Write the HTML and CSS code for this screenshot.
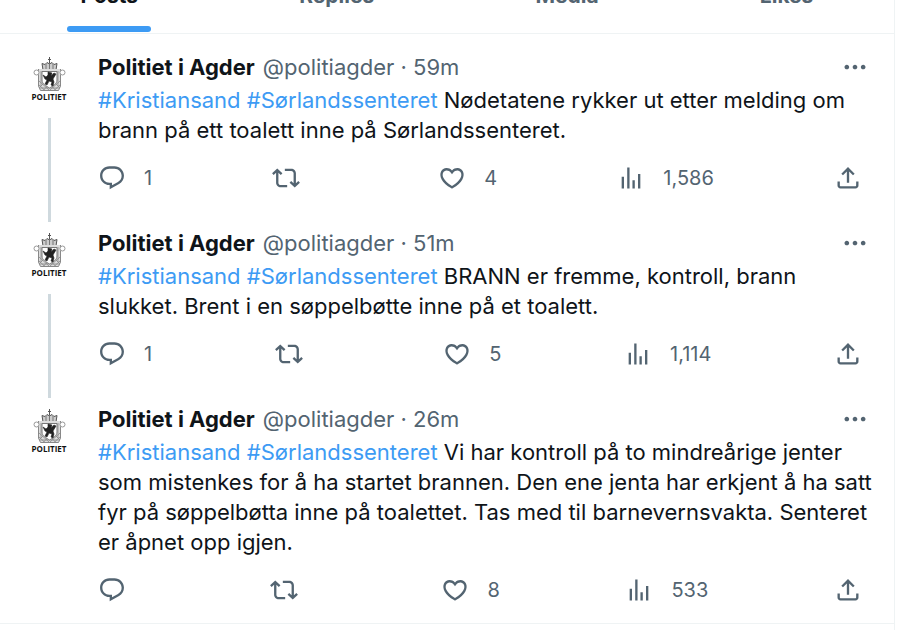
FILE: index.html
```
<!DOCTYPE html>
<html lang="en">
<head>
    <meta charset="UTF-8">
    <title>Politiet i Agder</title>
    <link rel="stylesheet" href="styles.css">
</head>
<body>

    <!-- shared icons -->
    <svg class="sprite" aria-hidden="true">
        <symbol id="icon-reply" viewBox="0 0 24 24">
            <path d="M1.751 10c0-4.42 3.584-8 8.005-8h4.366c4.49 0 8.129 3.64 8.129 8.13 0 2.96-1.607 5.68-4.196 7.11l-8.054 4.46v-3.69h-.067c-4.49.1-8.183-3.51-8.183-8.01zm8.005-6c-3.317 0-6.005 2.69-6.005 6 0 3.37 2.77 6.08 6.138 6.01l.351-.01h1.761v2.3l5.087-2.81c1.951-1.08 3.163-3.13 3.163-5.36 0-3.39-2.744-6.13-6.129-6.13H9.756z"/>
        </symbol>
        <symbol id="icon-repost" viewBox="0 0 24 24">
            <path d="M4.5 3.88l4.432 4.14-1.364 1.46L5.5 7.55V16c0 1.1.896 2 2 2H13v2H7.5c-2.209 0-4-1.79-4-4V7.55L1.432 9.48.068 8.02 4.5 3.88zM16.5 6H11V4h5.5c2.209 0 4 1.79 4 4v8.45l2.068-1.93 1.364 1.46-4.432 4.14-4.432-4.14 1.364-1.46 2.068 1.93V8c0-1.1-.896-2-2-2z"/>
        </symbol>
        <symbol id="icon-like" viewBox="0 0 24 24">
            <path d="M16.697 5.5c-1.222-.06-2.679.51-3.89 2.16l-.805 1.09-.806-1.09C9.984 6.01 8.526 5.44 7.304 5.5c-1.243.07-2.349.78-2.91 1.91-.552 1.12-.633 2.78.479 4.82 1.074 1.97 3.257 4.27 7.129 6.61 3.87-2.34 6.052-4.64 7.126-6.61 1.111-2.04 1.03-3.7.477-4.82-.561-1.13-1.666-1.84-2.908-1.91zm4.187 7.69c-1.351 2.48-4.001 5.12-8.379 7.67l-.503.3-.504-.3c-4.379-2.55-7.029-5.19-8.382-7.67-1.36-2.5-1.41-4.86-.514-6.67.887-1.79 2.647-2.91 4.601-3.01 1.651-.09 3.368.56 4.798 2.01 1.429-1.45 3.146-2.1 4.796-2.01 1.954.1 3.714 1.22 4.601 3.01.896 1.81.846 4.17-.514 6.67z"/>
        </symbol>
        <symbol id="icon-views" viewBox="0 0 24 24">
            <path d="M8.75 21V3h2v18h-2zM18 21V8.5h2V21h-2zM4 21l.004-10h2L6 21H4zm9.248 0v-7h2v7h-2z"/>
        </symbol>
        <symbol id="icon-share" viewBox="0 0 24 24">
            <path d="M12 2.59l5.7 5.7-1.41 1.42L13 6.41V16h-2V6.41l-3.3 3.3-1.41-1.42L12 2.59zM21 15l-.02 3.51c0 1.38-1.12 2.49-2.5 2.49H5.5C4.11 21 3 19.88 3 18.5V15h2v3.5c0 .28.22.5.5.5h12.98c.28 0 .5-.22.5-.5L19 15h2z"/>
        </symbol>
        <symbol id="icon-more" viewBox="0 0 24 24">
            <path d="M3 12c0-1.1.9-2 2-2s2 .9 2 2-.9 2-2 2-2-.9-2-2zm9 2c1.1 0 2-.9 2-2s-.9-2-2-2-2 .9-2 2 .9 2 2 2zm7 0c1.1 0 2-.9 2-2s-.9-2-2-2-2 .9-2 2 .9 2 2 2z"/>
        </symbol>
        <symbol id="crest" viewBox="0 0 60 60">
            <!-- crown -->
            <path d="M30.500 5v6M29 7.500h3" stroke="#555"/>
            <path d="M23 11.500l1 6.500h13l1-6.500-3 1-2-2-2.500 1.500-2.500-1.500-2 2z" fill="#ccc" stroke="#555"/>
            <path d="M27 12v5M30.500 11v6M34 12v5" stroke="#777"/>
            <path d="M23.500 18.500h14" stroke="#333" stroke-width="1.500"/>
            <!-- mesh -->
            <path d="M19.500 17v17l2 4.500h18l2-4.500V17" fill="#ddd" stroke="#888"/>
            <path d="M22 19v15M39 19v15" stroke="#999"/>
            <path d="M20 29l10 9M20 33l6 5.500M41 29l-10 9M41 33l-6 5.500M20 36l5-5M41 36l-5-5M24 38.500l5-5M37 38.500l-5-5M21 36h19" stroke="#888" stroke-width=".8" fill="none"/>
            <circle cx="17.500" cy="20.500" r="2.500" fill="#fff" stroke="#999"/>
            <circle cx="43.500" cy="20.500" r="2.500" fill="#fff" stroke="#999"/>
            <!-- shield and lion -->
            <path d="M23 19.500h15V28c0 4-4 6-7.500 8-3.500-2-7.500-4-7.500-8z" fill="#fff" stroke="#777"/>
            <path d="M29 20l4 1-1 3 3-3 2 1-3 5 1 3-1 4-2-1 1-3-3-1-2 4-2-1 2-4-2-1-2-4 3 2 2-2z" fill="#222" stroke="#222" stroke-width=".6"/>
            <text x="30" y="48" text-anchor="middle" class="crest-text">POLITIET</text>
        </symbol>
    </svg>

    <main class="timeline">
        <nav class="tabs">
            <a href="#" class="tab active">Posts</a>
            <a href="#" class="tab">Replies</a>
            <a href="#" class="tab">Media</a>
            <a href="#" class="tab">Likes</a>
        </nav>

        <section class="thread">
            <article class="post">
                <div class="rail">
                    <svg class="avatar" role="img" aria-label="Politiet"><use href="#crest"/></svg>
                    <div class="line"></div>
                </div>
                <div class="content">
                    <header class="post-header">
                        <a href="#" class="name">Politiet i Agder</a>
                        <span class="meta">@politiagder · 59m</span>
                        <button class="more" aria-label="More"><svg class="icon"><use href="#icon-more"/></svg></button>
                    </header>
                    <p class="text"><a href="#">#Kristiansand</a> <a href="#">#Sørlandssenteret</a> Nødetatene rykker ut etter melding om brann på ett toalett inne på Sørlandssenteret.</p>
                    <div class="actions">
                        <button aria-label="Reply"><svg class="icon"><use href="#icon-reply"/></svg><span class="count">1</span></button>
                        <button aria-label="Repost"><svg class="icon"><use href="#icon-repost"/></svg><span class="count"></span></button>
                        <button aria-label="Like"><svg class="icon"><use href="#icon-like"/></svg><span class="count">4</span></button>
                        <button aria-label="Views"><svg class="icon"><use href="#icon-views"/></svg><span class="count">1,586</span></button>
                        <button aria-label="Share"><svg class="icon"><use href="#icon-share"/></svg></button>
                    </div>
                </div>
            </article>

            <article class="post">
                <div class="rail">
                    <svg class="avatar" role="img" aria-label="Politiet"><use href="#crest"/></svg>
                    <div class="line"></div>
                </div>
                <div class="content">
                    <header class="post-header">
                        <a href="#" class="name">Politiet i Agder</a>
                        <span class="meta">@politiagder · 51m</span>
                        <button class="more" aria-label="More"><svg class="icon"><use href="#icon-more"/></svg></button>
                    </header>
                    <p class="text"><a href="#">#Kristiansand</a> <a href="#">#Sørlandssenteret</a> BRANN er fremme, kontroll, brann slukket. Brent i en søppelbøtte inne på et toalett.</p>
                    <div class="actions">
                        <button aria-label="Reply"><svg class="icon"><use href="#icon-reply"/></svg><span class="count">1</span></button>
                        <button aria-label="Repost"><svg class="icon"><use href="#icon-repost"/></svg><span class="count"></span></button>
                        <button aria-label="Like"><svg class="icon"><use href="#icon-like"/></svg><span class="count">5</span></button>
                        <button aria-label="Views"><svg class="icon"><use href="#icon-views"/></svg><span class="count">1,114</span></button>
                        <button aria-label="Share"><svg class="icon"><use href="#icon-share"/></svg></button>
                    </div>
                </div>
            </article>

            <article class="post">
                <div class="rail">
                    <svg class="avatar" role="img" aria-label="Politiet"><use href="#crest"/></svg>
                </div>
                <div class="content">
                    <header class="post-header">
                        <a href="#" class="name">Politiet i Agder</a>
                        <span class="meta">@politiagder · 26m</span>
                        <button class="more" aria-label="More"><svg class="icon"><use href="#icon-more"/></svg></button>
                    </header>
                    <p class="text"><a href="#">#Kristiansand</a> <a href="#">#Sørlandssenteret</a> Vi har kontroll på to mindreårige jenter som mistenkes for å ha startet brannen. Den ene jenta har erkjent å ha satt fyr på søppelbøtta inne på toalettet. Tas med til barnevernsvakta. Senteret er åpnet opp igjen.</p>
                    <div class="actions">
                        <button aria-label="Reply"><svg class="icon"><use href="#icon-reply"/></svg><span class="count"></span></button>
                        <button aria-label="Repost"><svg class="icon"><use href="#icon-repost"/></svg><span class="count"></span></button>
                        <button aria-label="Like"><svg class="icon"><use href="#icon-like"/></svg><span class="count">8</span></button>
                        <button aria-label="Views"><svg class="icon"><use href="#icon-views"/></svg><span class="count">533</span></button>
                        <button aria-label="Share"><svg class="icon"><use href="#icon-share"/></svg></button>
                    </div>
                </div>
            </article>
        </section>
    </main>

</body>
</html>
```
FILE: styles.css
```
* {
    box-sizing: border-box;
}

body {
    margin: 0;
    padding-right: 24px;
    background-color: #fff;
    color: #0f1419;
    font-family: Inter, sans-serif;
    font-size: 22px;
    line-height: 30px;
}

a {
    color: inherit;
    text-decoration: none;
}

button {
    display: flex;
    align-items: center;
    padding: 0;
    border: 0;
    background: none;
    color: inherit;
    font: inherit;
    cursor: pointer;
}

.sprite {
    display: none;
}

.timeline {
    min-height: 100vh;
    border-right: 1px solid #eff3f4;
}

/* the bar is scrolled half out of view, so labels hang from the bottom */
.tabs {
    display: flex;
    align-items: flex-end;
    height: 34px;
    overflow: hidden;
    border-bottom: 1px solid #eff3f4;
}

.tab {
    position: relative;
    flex: 1 1 auto;
    padding: 22px 16px;
    color: #536471;
    font-size: 21px;
    font-weight: bold;
    text-align: center;
}

.tab.active {
    color: #0f1419;
}

.tab.active::after {
    content: "";
    position: absolute;
    bottom: 1px;
    left: 50%;
    width: 84px;
    height: 6px;
    margin-left: -42px;
    border-radius: 3px;
    background-color: #3d9bf4;
}

.thread {
    padding-top: 18px;
    border-bottom: 1px solid #eff3f4;
}

.post {
    display: flex;
    gap: 19px;
    padding: 0 20px 0 19px;
}

.rail {
    display: flex;
    flex-direction: column;
    align-items: center;
    width: 60px;
}

.avatar {
    width: 60px;
    height: 60px;
    border-radius: 50%;
}

.crest-text {
    font-family: "Open Sans", sans-serif;
    font-size: 8px;
    font-weight: 700;
    fill: #111;
}

.line {
    flex: 1;
    width: 3px;
    margin: 6px 0;
    background-color: #cfd9de;
}

.content {
    flex: 1;
    min-width: 0;
    padding-bottom: 36px;
}

.post:last-child .content {
    padding-bottom: 19px;
}

.post-header {
    display: flex;
    gap: 8px;
    height: 30px;
    padding-right: 5px;
}

.name {
    font-weight: bold;
}

.meta,
.more,
.actions {
    color: #536471;
}

.more {
    margin-left: auto;
}

.text {
    margin: 3px 0 19px;
}

.text a {
    color: #3d9bf4;
}

.actions {
    display: flex;
    justify-content: space-between;
    padding-right: 12px;
    font-size: 20px;
}

.actions button {
    height: 28px;
}

.icon {
    width: 28px;
    height: 28px;
    fill: currentColor;
}

.count {
    padding-left: 18px;
}
```
